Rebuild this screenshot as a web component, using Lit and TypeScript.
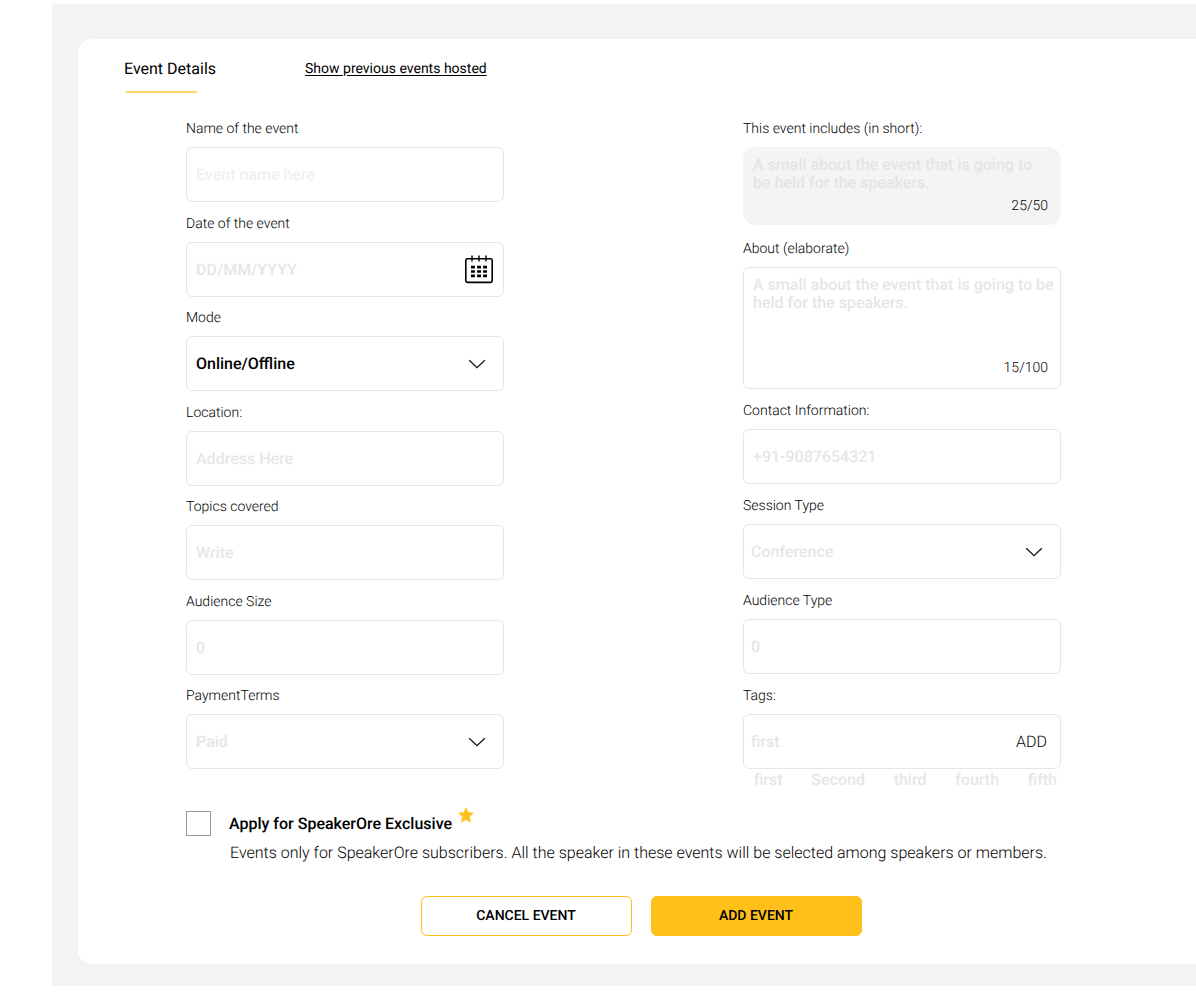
import { LitElement, html, css, svg } from "lit";
import { customElement } from "lit/decorators.js";

const chevron = html`<svg class="chevron" width="18" height="10" viewBox="0 0 18 10" aria-hidden="true">
  ${svg`<path d="M1.2 1.2 9 8.6 16.8 1.2" fill="none" stroke="#111" stroke-width="1.3" />`}
</svg>`;

const calendar = html`<svg width="28" height="29" viewBox="0 0 28 29" aria-hidden="true">
  <rect x="0.8" y="3.8" width="26.4" height="23.6" rx="1.6" fill="none" stroke="#000" stroke-width="1.6" />
  <path d="M7 0.5v6M14 0.5v6M21 0.5v6" stroke="#000" stroke-width="1.4" />
  <path
    d="M6 12.1h3.9M12.1 12.1h3.9M18.1 12.1h3.9M6 16.5h3.9M12.1 16.5h3.9M18.1 16.5h3.9M6 20.9h3.9M12.1 20.9h3.9M18.1 20.9h3.9"
    stroke="#000"
    stroke-width="2.7"
  />
</svg>`;

const star = html`<svg class="star" width="16" height="16" viewBox="0 0 16 16" aria-hidden="true">
  <path
    d="M8 0.4 10.2 5.4 15.4 6 11.5 9.5 12.7 15.3 8 12.6 3.3 15.3 4.5 9.5 0.6 6 5.8 5.4Z"
    fill="#ffc01a"
    stroke="#ffc01a"
    stroke-width="0.5"
    stroke-linejoin="round"
  />
</svg>`;

@customElement("app-root")
export class AppRoot extends LitElement {
  static styles = css`
    :host {
      display: block;
      padding: 4px 0 6px 52px;
      background: #fff;
      color: #000;
      font-family: Roboto, "Liberation Sans", sans-serif;
      font-size: 16px;
      line-height: 20px;
      text-rendering: geometricPrecision;
    }
    * {
      box-sizing: border-box;
    }
    .shell {
      padding: 35px 0 22px 26px;
      background: #f3f3f3;
    }
    .card {
      padding: 20px 0 28px;
      border-radius: 14px 0 0 14px;
      background: #fff;
    }
    .head {
      display: flex;
      align-items: flex-start;
      gap: 89px;
      padding-left: 46px;
    }
    .title {
      margin: 0;
      font-size: 16px;
      font-weight: 400;
    }
    .title::after {
      content: "";
      display: block;
      width: 71px;
      height: 2px;
      margin: 12px 0 0 2px;
      background: #ffd56c;
    }
    .previous {
      color: inherit;
      font-size: 14px;
      text-underline-offset: 2px;
    }
    .form {
      display: grid;
      grid-template-columns: minmax(0, 318px) minmax(0, 318px);
      justify-content: space-between;
      column-gap: 24px;
      padding: 26px 135px 0 108px;
    }
    .column {
      display: flex;
      flex-direction: column;
      justify-content: space-between;
      min-height: 650px;
    }
    .field {
      display: flex;
      flex-direction: column;
      gap: 8px;
    }
    .roomy {
      padding-bottom: 2px;
    }
    .label {
      font-size: 14px;
      font-weight: 300;
    }
    .box {
      display: flex;
      align-items: center;
      height: 55px;
      border: 1px solid #e6e6e6;
      border-radius: 6px;
      background: #fff;
    }
    .note {
      flex-direction: column;
      align-items: stretch;
      height: 122px;
      padding: 8px 0 10px;
    }
    .note.short {
      height: 78px;
      padding-bottom: 8px;
      border-color: #f4f4f4;
      border-radius: 12px;
      background: #f4f4f4;
    }
    .control {
      flex: 1;
      min-width: 0;
      height: 100%;
      margin: 0;
      padding: 0 9px;
      border: 0;
      border-radius: 6px;
      outline-color: #ffc01a;
      background: transparent;
      color: #000;
      font: inherit;
      font-weight: 500;
      text-rendering: inherit;
    }
    .control::placeholder {
      color: #e6e6e6;
      opacity: 1;
    }
    .faint::placeholder {
      color: #f0f0f0;
    }
    .near {
      padding-left: 7px;
    }
    textarea.control {
      padding: 0 0 0 9px;
      resize: none;
      line-height: 18px;
      overflow: hidden;
    }
    .short textarea.control {
      padding-right: 24px;
    }
    .short .control::placeholder {
      color: #e4e4e4;
    }
    .count {
      padding-right: 12px;
      font-size: 14px;
      font-weight: 300;
      text-align: right;
    }
    .pick {
      display: grid;
    }
    .pick > * {
      grid-area: 1 / 1;
    }
    .pick .control {
      width: 100%;
      height: 53px;
      appearance: none;
    }
    .control.unset {
      color: #e6e6e6;
    }
    .chevron {
      justify-self: end;
      margin-right: 17px;
      pointer-events: none;
    }
    .icon-button,
    .add {
      padding: 0;
      border: 0;
      background: none;
      color: inherit;
      font: inherit;
      text-rendering: inherit;
      cursor: pointer;
    }
    .icon-button {
      display: flex;
      margin-right: 10px;
    }
    .add {
      margin-right: 13px;
      font-weight: 300;
    }
    .tags {
      display: flex;
      grid-column: 2;
      justify-content: space-between;
      margin: 0;
      padding: 1px 4px 0 11px;
      list-style: none;
      color: #e6e6e6;
      font-weight: 500;
    }
    .exclusive {
      display: grid;
      grid-template-columns: 25px 1fr;
      column-gap: 18px;
      padding: 21px 135px 0 108px;
    }
    .check {
      appearance: none;
      width: 25px;
      height: 25px;
      margin: 0;
      border: 1px solid #999;
      background: #fff;
    }
    .check:checked {
      background: #ffc01a;
    }
    .offer {
      display: flex;
      align-items: center;
      gap: 6px;
      font-weight: 500;
    }
    .star {
      align-self: flex-start;
      margin-top: -4px;
    }
    .terms {
      grid-column: 2;
      margin: 7px 0 0 1px;
      font-weight: 300;
    }
    .actions {
      display: flex;
      justify-content: center;
      gap: 19px;
      padding: 33px 0 0 8px;
    }
    .button {
      width: 211px;
      height: 40px;
      padding: 0;
      border: 1px solid #ffc01a;
      border-radius: 6px;
      background: #fff;
      color: #000;
      font: inherit;
      font-size: 14px;
      font-weight: 500;
      text-rendering: inherit;
      cursor: pointer;
    }
    .primary {
      background: #ffc01a;
    }
  `;

  render() {
    return html`
      <div class="shell">
        <main class="card">
          <header class="head">
            <h1 class="title">Event Details</h1>
            <a class="previous" href="#previous">Show previous events hosted</a>
          </header>
          <form @submit=${(e: Event) => e.preventDefault()}>
            <div class="form">
              <div class="column">
                <div class="field">
                  <label class="label" for="name">Name of the event</label>
                  <div class="box"><input class="control faint" id="name" placeholder="Event name here" /></div>
                </div>
                <div class="field">
                  <label class="label" for="date">Date of the event</label>
                  <div class="box">
                    <input class="control" id="date" placeholder="DD/MM/YYYY" />
                    <button class="icon-button" type="button" aria-label="Open calendar">${calendar}</button>
                  </div>
                </div>
                <div class="field">
                  <label class="label" for="mode">Mode</label>
                  <div class="box pick">
                    <select class="control" id="mode"><option>Online/Offline</option></select>
                    ${chevron}
                  </div>
                </div>
                <div class="field">
                  <label class="label" for="location">Location:</label>
                  <div class="box"><input class="control" id="location" placeholder="Address Here" /></div>
                </div>
                <div class="field">
                  <label class="label" for="topics">Topics covered</label>
                  <div class="box"><input class="control" id="topics" placeholder="Write" /></div>
                </div>
                <div class="field">
                  <label class="label" for="size">Audience Size</label>
                  <div class="box"><input class="control" id="size" inputmode="numeric" placeholder="0" /></div>
                </div>
                <div class="field">
                  <label class="label" for="payment">PaymentTerms</label>
                  <div class="box pick">
                    <select class="control unset" id="payment"><option>Paid</option></select>
                    ${chevron}
                  </div>
                </div>
              </div>

              <div class="column">
                <div class="field roomy">
                  <label class="label" for="summary">This event includes (in short):</label>
                  <div class="box note short">
                    <textarea
                      class="control"
                      id="summary"
                      placeholder="A small about the event that is going to be held for the speakers."
                    ></textarea>
                    <output class="count" for="summary">25/50</output>
                  </div>
                </div>
                <div class="field">
                  <label class="label" for="about">About (elaborate)</label>
                  <div class="box note">
                    <textarea
                      class="control"
                      id="about"
                      placeholder="A small about the event that is going to be held for the speakers."
                    ></textarea>
                    <output class="count" for="about">15/100</output>
                  </div>
                </div>
                <div class="field">
                  <label class="label" for="contact">Contact Information:</label>
                  <div class="box"><input class="control" id="contact" type="tel" placeholder="+91-9087654321" /></div>
                </div>
                <div class="field">
                  <label class="label" for="session">Session Type</label>
                  <div class="box pick">
                    <select class="control unset near" id="session"><option>Conference</option></select>
                    ${chevron}
                  </div>
                </div>
                <div class="field">
                  <label class="label" for="audience">Audience Type</label>
                  <div class="box"><input class="control near" id="audience" placeholder="0" /></div>
                </div>
                <div class="field">
                  <label class="label" for="tags">Tags:</label>
                  <div class="box">
                    <input class="control near" id="tags" placeholder="first" />
                    <button class="add" type="button">ADD</button>
                  </div>
                </div>
              </div>

              <ul class="tags">
                ${["first", "Second", "third", "fourth", "fifth"].map((tag) => html`<li>${tag}</li>`)}
              </ul>
            </div>

            <div class="exclusive">
              <input class="check" type="checkbox" id="exclusive" aria-describedby="terms" />
              <label class="offer" for="exclusive">Apply for SpeakerOre Exclusive ${star}</label>
              <p class="terms" id="terms">
                Events only for SpeakerOre subscribers. All the speaker in these events will be selected among speakers
                or members.
              </p>
            </div>

            <div class="actions">
              <button class="button" type="button">CANCEL EVENT</button>
              <button class="button primary" type="submit">ADD EVENT</button>
            </div>
          </form>
        </main>
      </div>
    `;
  }
}
